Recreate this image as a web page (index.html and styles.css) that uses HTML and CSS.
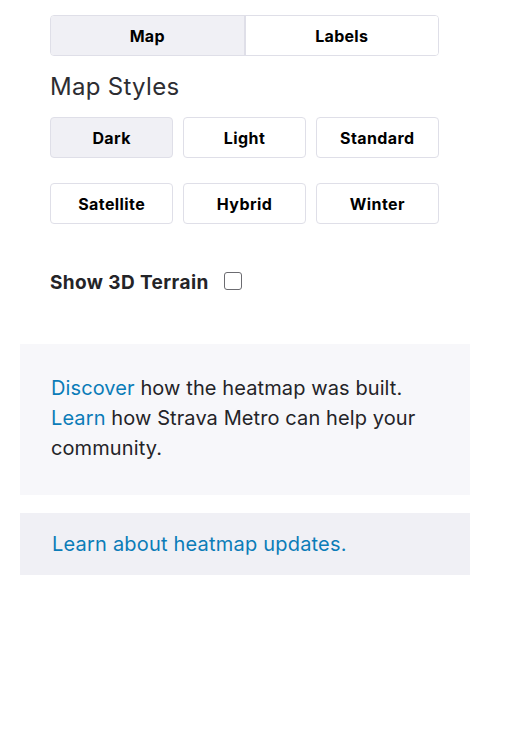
FILE: index.html
```html
<!DOCTYPE html>
<html>
<head>
<meta charset="utf-8">
<link rel="stylesheet" href="styles.css">
</head>
<body>
<div class="wrap">
  <div class="top">
    <div class="segmented">
      <button class="seg active">Map</button>
      <button class="seg">Labels</button>
    </div>
    <h2 class="title">Map Styles</h2>
    <div class="styles">
      <button class="style active">Dark</button>
      <button class="style">Light</button>
      <button class="style">Standard</button>
      <button class="style">Satellite</button>
      <button class="style">Hybrid</button>
      <button class="style">Winter</button>
    </div>
    <label class="terrain">
      <span>Show 3D Terrain</span>
      <span class="check"></span>
    </label>
  </div>
  <div class="info">
    <a class="link" href="#">Discover</a> how the heatmap was built.<br>
    <a class="link" href="#">Learn</a> how Strava Metro can help your community.
  </div>
  <div class="updates">
    <a class="link" href="#">Learn about heatmap updates.</a>
  </div>
</div>
</body>
</html>
```
FILE: styles.css
```css
html, body {
  margin: 0;
  padding: 0;
  background: #ffffff;
}
body {
  font-family: Inter, "Noto Sans", sans-serif;
  color: #242428;
}
.wrap {
  width: 450px;
  margin-left: 20px;
}
.top {
  padding: 15px 30px 0 30px;
}
.segmented {
  display: flex;
  width: 389px;
  height: 41px;
  box-sizing: border-box;
  border: 1px solid #dfdfe8;
  border-radius: 4px;
  overflow: hidden;
}
.seg {
  flex: 1;
  border: 0;
  background: #fff;
  font-family: inherit;
  font-size: 16px;
  font-weight: 700;
  letter-spacing: 0.3px;
  color: #000;
  padding: 0;
}
.seg.active {
  background: #f0f0f5;
  border-right: 2px solid #dfdfe8;
}
.title {
  margin: 16px 0 0 0;
  font-size: 24px;
  line-height: 30px;
  font-weight: 400;
  letter-spacing: 0.3px;
  color: #2d2d32;
}
.styles {
  margin-top: 15px;
  width: 389px;
  display: grid;
  grid-template-columns: repeat(3, 1fr);
  column-gap: 9.5px;
  row-gap: 25px;
}
.style {
  height: 41px;
  box-sizing: border-box;
  border: 1px solid #dfdfe8;
  border-radius: 4px;
  background: #fff;
  font-family: inherit;
  font-size: 16px;
  font-weight: 700;
  letter-spacing: 0.4px;
  color: #000;
  padding: 0;
}
.style.active {
  background: #f0f0f5;
}
.terrain {
  display: flex;
  align-items: center;
  gap: 15px;
  margin-top: 46px;
  height: 24px;
  font-size: 19px;
  font-weight: 700;
  letter-spacing: 0.4px;
  color: #242428;
}
.check {
  width: 16px;
  height: 16px;
  border: 1.5px solid #6b6b70;
  border-radius: 3px;
  margin-top: -3px;
}
.info {
  margin-top: 50px;
  background: #f7f7fa;
  padding: 29px 31px 32px 31px;
  font-size: 20px;
  line-height: 30px;
  letter-spacing: 0.1px;
  color: #242428;
}
.updates {
  margin-top: 18px;
  background: #f0f0f5;
  padding: 16px 32px;
  font-size: 20px;
  line-height: 30px;
  letter-spacing: 0.2px;
}
.link {
  color: #0b7cb8;
  text-decoration: none;
}
```
